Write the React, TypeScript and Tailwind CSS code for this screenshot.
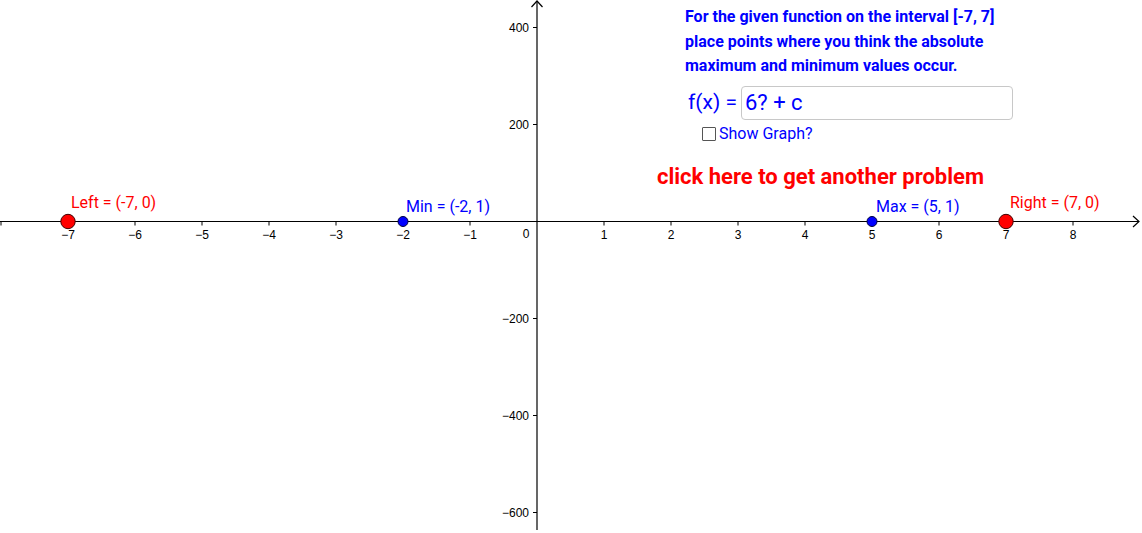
import { useState } from 'react';

// graph origin in px and scale per unit
const OX = 537;
const OY = 221.5;
const UX = 67;
const UY = 97 / 200;

const xTicks = [-8, -7, -6, -5, -4, -3, -2, -1, 1, 2, 3, 4, 5, 6, 7, 8];
const yTicks = [400, 200, -200, -400, -600];

const px = (x: number) => OX + x * UX;
const py = (y: number) => OY - y * UY;

function Axes() {
  return (
    <svg className="absolute inset-0" width={1142} height={533}>
      {/* x axis */}
      <line x1={0} y1={OY} x2={1139} y2={OY} stroke="#000" strokeWidth={1.2} />
      <polyline points={`1133,${OY - 5.5} 1139,${OY} 1133,${OY + 5.5}`} fill="none" stroke="#000" strokeWidth={1.2} />
      {/* y axis */}
      <line x1={OX} y1={530} x2={OX} y2={1} stroke="#000" strokeWidth={1.2} />
      <polyline points={`${OX - 5.5},7 ${OX},1 ${OX + 5.5},7`} fill="none" stroke="#000" strokeWidth={1.2} />

      <g fontFamily="'Liberation Sans', Arial, sans-serif" fontSize={12} fill="#000">
        {xTicks.map(k => (
          <g key={k}>
            <line x1={px(k)} y1={OY} x2={px(k)} y2={OY + 4} stroke="#000" strokeWidth={1} />
            {k > -8 && (
              <text x={px(k)} y={239} textAnchor="middle">{k < 0 ? `\u2212${-k}` : k}</text>
            )}
          </g>
        ))}
        <text x={526} y={238} textAnchor="middle">0</text>
        {yTicks.map(v => (
          <g key={v}>
            <line x1={OX - 4} y1={py(v)} x2={OX} y2={py(v)} stroke="#000" strokeWidth={1} />
            <text x={529} y={py(v) + 4} textAnchor="end">{v < 0 ? `\u2212${-v}` : v}</text>
          </g>
        ))}
      </g>

      {/* points */}
      <circle cx={px(-7)} cy={OY} r={7.2} fill="#ff0000" stroke="#400000" strokeWidth={1} />
      <circle cx={px(7)} cy={OY} r={7.2} fill="#ff0000" stroke="#400000" strokeWidth={1} />
      <circle cx={px(-2)} cy={OY} r={5} fill="#0000ff" stroke="#000040" strokeWidth={1} />
      <circle cx={px(5)} cy={OY} r={5} fill="#0000ff" stroke="#000040" strokeWidth={1} />

      <g fontFamily="Roboto, 'Liberation Sans', sans-serif" fontSize={16}>
        <text x={71} y={207.5} fill="#ff0000">Left = (-7, 0)</text>
        <text x={1010} y={207.5} fill="#ff0000">Right = (7, 0)</text>
        <text x={406} y={211.5} fill="#0000ff">Min = (-2, 1)</text>
        <text x={876} y={211.5} fill="#0000ff">Max = (5, 1)</text>
      </g>
    </svg>
  );
}

export default function App() {
  const [expr, setExpr] = useState('6? + c');
  const [showGraph, setShowGraph] = useState(false);

  return (
    <div className="relative w-[1142px] h-[533px] overflow-hidden bg-white font-['Roboto','Liberation_Sans',sans-serif]">
      <Axes />

      {/* applet controls floating over the graph */}
      <div className="absolute left-[657px] top-[5px] flex flex-col">
        <div className="pl-[28px] text-[16px] leading-[24.5px] font-bold text-[#0000ff]">
          <p>For the given function on the interval [-7, 7]</p>
          <p>place points where you think the absolute</p>
          <p>maximum and minimum values occur.</p>
        </div>

        <div className="mt-[7px] pl-[31px] flex items-center gap-[4px]">
          <span className="text-[21px] text-[#0000ff] leading-none">f(x) =</span>
          <input
            value={expr}
            onChange={e => setExpr(e.target.value)}
            className="w-[272px] h-[34px] rounded-[4px] border border-[#c8c8c8] px-[3px] text-[22px] text-[#0000ff] outline-none"
          />
        </div>

        <label className="mt-[4px] pl-[45px] flex items-center gap-[3px] cursor-pointer">
          <span
            onClick={() => setShowGraph(s => !s)}
            className="w-[14px] h-[14px] border border-[#555] rounded-[1px] bg-white flex items-center justify-center text-[10px] leading-none"
          >
            {showGraph ? '✓' : ''}
          </span>
          <span className="text-[16px] text-[#0000ff] leading-[20px]">Show Graph?</span>
        </label>

        <button
          type="button"
          className="mt-[19px] self-start text-[22px] font-bold text-[#ff0000] leading-[28px]"
        >
          click here to get another problem
        </button>
      </div>
    </div>
  );
}
